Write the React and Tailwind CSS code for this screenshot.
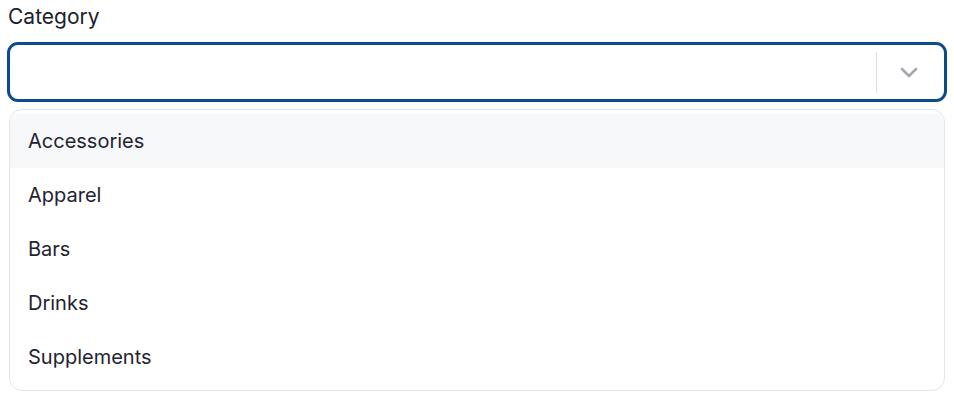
export default function App() {
  const items = ["Accessories", "Apparel", "Bars", "Drinks", "Supplements"];
  return (
    <div className="w-[954px] h-[400px] bg-white px-[7px] pt-[3px]" style={{ fontFamily: "Inter, 'Noto Sans', sans-serif" }}>
      <div className="h-[29px] leading-[28px] text-[21px] text-[#1a202c] pl-[1px]">Category</div>
      <div className="mt-[10px] h-[60px] w-[940px] border-[3px] border-[#0a4d8c] rounded-[11px] flex items-center justify-end">
        <div className="w-px h-[41px] bg-[#dcdfe4]"></div>
        <div className="w-[67px] pr-[3px] flex items-center justify-center">
          <svg width="18" height="11" viewBox="0 0 18 11" fill="none">
            <path d="M2 2l7 7 7-7" stroke="#a3a8b3" strokeWidth="2.6" strokeLinecap="round" strokeLinejoin="round" />
          </svg>
        </div>
      </div>
      <div className="mt-[7px] mx-[2px] w-[936px] border border-[#e3e5e8] rounded-[13px] pt-[4px] pb-[6px] overflow-hidden">
        {items.map((it, i) => (
          <div
            key={it}
            className={`h-[54px] flex items-center pl-[18px] text-[20px] text-[#1f2430] ${i === 0 ? "bg-[#f7f8fa]" : ""}`}
          >
            {it}
          </div>
        ))}
      </div>
    </div>
  );
}
